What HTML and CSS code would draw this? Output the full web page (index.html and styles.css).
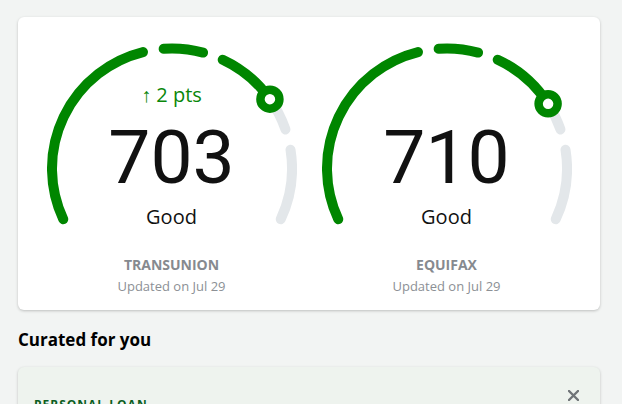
FILE: index.html
```html
<!DOCTYPE html>
<html lang="en">
<head>
    <meta charset="UTF-8">
    <meta name="viewport" content="width=device-width, initial-scale=1.0">
    <title>Credit Scores</title>
    <link rel="stylesheet" href="styles.css">
</head>
<body>

    <div class="card scores">
        <div class="gauge">
            <div class="dial">
                <svg width="250" height="190" viewBox="0 0 250 190">
                    <path class="track" d="M222.93 60.15 A120 120 0 0 1 238.46 90.43" />
                    <path class="track" d="M243.52 110.73 A120 120 0 0 1 233.76 180.21" />
                    <path class="fill" d="M16.24 180.21 A120 120 0 0 1 95.97 13.06" />
                    <path class="fill" d="M116.63 9.79 A120 120 0 0 1 156.06 13.59" />
                    <path class="fill" d="M175.71 20.74 A120 120 0 0 1 222.93 60.15" />
                    <circle class="marker" cx="222.93" cy="60.15" r="9.5" />
                </svg>
                <div class="reading">
                    <div class="delta">&uarr; 2 pts</div>
                    <div class="score">703</div>
                    <div class="rating">Good</div>
                </div>
            </div>
            <div class="bureau">TRANSUNION</div>
            <div class="updated">Updated on Jul 29</div>
        </div>

        <div class="gauge">
            <div class="dial">
                <svg width="250" height="190" viewBox="0 0 250 190">
                    <path class="track" d="M226.10 64.84 A120 120 0 0 1 238.46 90.43" />
                    <path class="track" d="M243.52 110.73 A120 120 0 0 1 233.76 180.21" />
                    <path class="fill" d="M16.24 180.21 A120 120 0 0 1 95.97 13.06" />
                    <path class="fill" d="M116.63 9.79 A120 120 0 0 1 156.06 13.59" />
                    <path class="fill" d="M175.71 20.74 A120 120 0 0 1 226.10 64.84" />
                    <circle class="marker" cx="226.10" cy="64.84" r="9.5" />
                </svg>
                <div class="reading">
                    <div class="delta"></div>
                    <div class="score">710</div>
                    <div class="rating">Good</div>
                </div>
            </div>
            <div class="bureau">EQUIFAX</div>
            <div class="updated">Updated on Jul 29</div>
        </div>
    </div>

    <h2 class="section-title">Curated for you</h2>

    <div class="card offer">
        <div class="offer-type">PERSONAL LOAN</div>
        <button class="dismiss" aria-label="Dismiss">
            <svg width="11" height="11" viewBox="0 0 11 11">
                <path d="M1 1 L10 10 M10 1 L1 10" />
            </svg>
        </button>
    </div>

</body>
</html>
```

FILE: styles.css
```css
/* Score overview */
body {
    background-color: #f2f4f3;
    color: #000000;
    font-family: 'Open Sans', sans-serif;
    margin: 0;
    padding: 17px 22px 0 18px;
    overflow: hidden;
}

.card {
    background-color: #ffffff;
    border-radius: 6px;
    box-shadow: 0 1px 3px rgba(0, 0, 0, 0.22);
}

.scores {
    display: flex;
    justify-content: center;
    gap: 25px;
    padding: 22px 0 15px;
}

.gauge {
    width: 250px;
    display: flex;
    flex-direction: column;
    align-items: center;
}

.dial {
    display: grid;
}

.dial svg,
.reading {
    grid-area: 1 / 1;
}

.dial svg {
    display: block;
}

.track,
.fill {
    fill: none;
    stroke-width: 10;
    stroke-linecap: round;
}

.track {
    stroke: #e3e7ea;
}

.fill {
    stroke: #008600;
}

.marker {
    fill: #ffffff;
    stroke: #008600;
    stroke-width: 8.5;
}

.reading {
    display: flex;
    flex-direction: column;
    align-items: center;
    padding-top: 44px;
}

.delta {
    height: 24px;
    font-size: 20px;
    line-height: 24px;
    color: #0a870a;
}

.score {
    margin-top: 13px;
    font-family: 'Roboto', sans-serif;
    font-size: 75px;
    line-height: 74px;
    color: #111111;
}

.rating {
    margin-top: 11px;
    font-size: 20px;
    line-height: 24px;
    color: #111111;
}

.bureau {
    margin-top: 27px;
    font-size: 14px;
    font-weight: 700;
    line-height: 18px;
    color: #868a8f;
}

.updated {
    margin-top: 3px;
    font-size: 13px;
    line-height: 18px;
    color: #8c9095;
}

.section-title {
    margin: 19px 0 16px;
    font-size: 17px;
    font-weight: 700;
    line-height: 22px;
}

.offer {
    background-color: #eef3ee;
    display: flex;
    justify-content: space-between;
    align-items: flex-start;
    padding: 23px 21px 30px 16px;
}

.offer-type {
    margin-top: 7px;
    font-size: 12px;
    font-weight: 700;
    line-height: 16px;
    letter-spacing: 1px;
    color: #0b5e1f;
}

.dismiss {
    border: none;
    background: none;
    padding: 0;
    cursor: pointer;
}

.dismiss svg {
    display: block;
}

.dismiss path {
    stroke: #707478;
    stroke-width: 2.4;
    stroke-linecap: round;
}
```
